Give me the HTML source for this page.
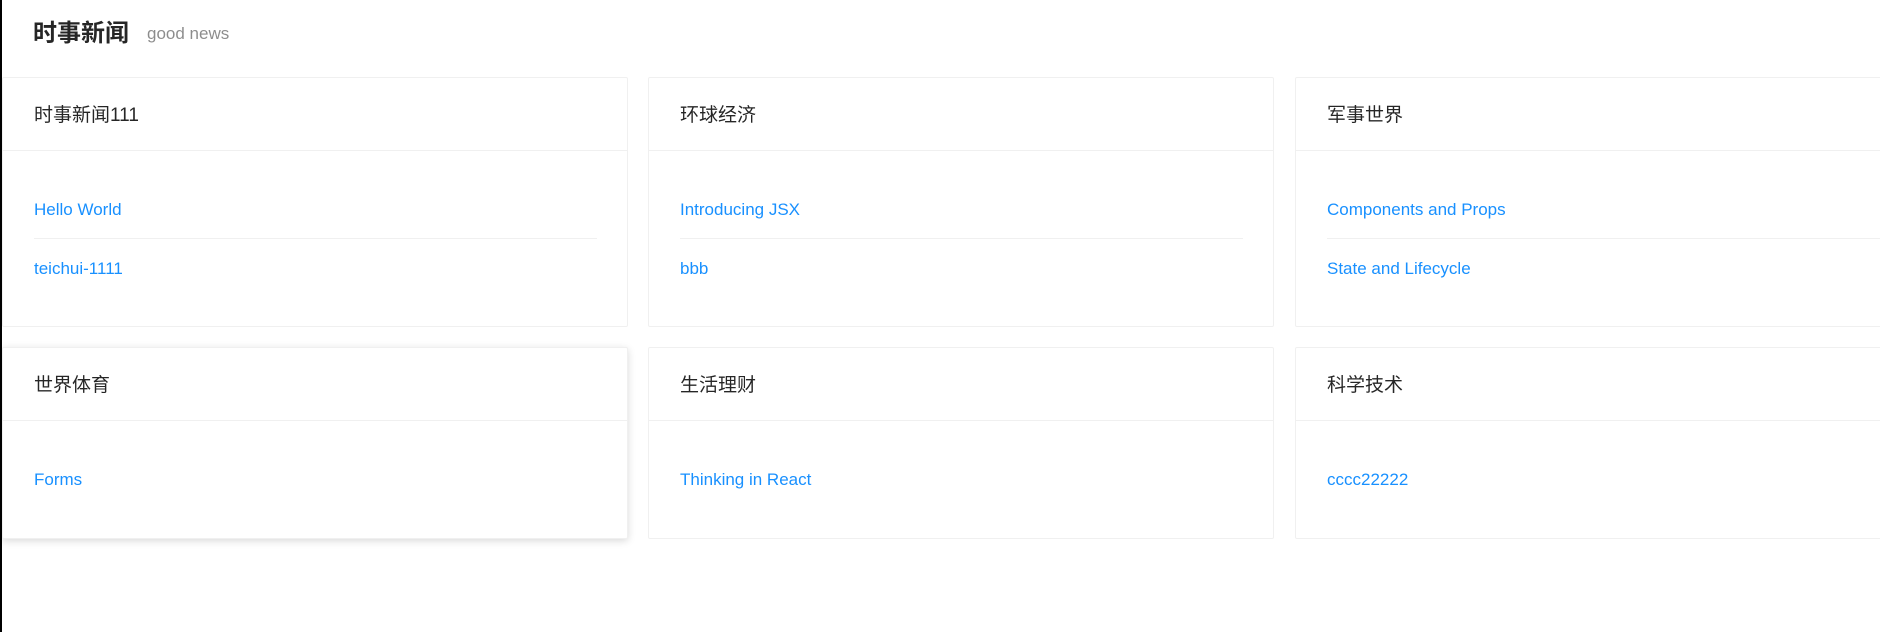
<!DOCTYPE html>
<html><head><meta charset="utf-8"><style>
*{margin:0;padding:0;box-sizing:border-box}
body{width:1880px;height:632px;background:#fff;position:relative;overflow:hidden;font-family:"Liberation Sans","Noto Sans CJK SC",sans-serif}
.bar{position:absolute;left:0;top:0;width:2px;height:632px;background:#000}
.h{position:absolute;left:33px;top:18px;font-size:24px;font-weight:bold;color:rgba(0,0,0,.85);line-height:32px}
.s{position:absolute;left:147px;top:22px;font-size:17px;color:rgba(0,0,0,.45);line-height:24px}
.card{position:absolute;border:1px solid #f0f0f0;border-radius:2px;background:#fff}
.card .t{position:absolute;left:31px;font-size:19px;color:rgba(0,0,0,.85);line-height:26px}
.card .d{position:absolute;left:0;right:0;height:1px;background:#f0f0f0}
.card .a{position:absolute;left:31px;font-size:17px;color:#1890ff;line-height:24px}
.card .l{position:absolute;left:31px;right:30px;height:1px;background:#f0f0f0}
</style></head><body>
<div class="bar"></div>
<div class="h">时事新闻</div><div class="s">good news</div>

<div class="card" style="left:2px;top:77px;width:626px;height:250px">
<div class="t" style="top:25px">时事新闻111</div><div class="d" style="top:72px"></div>
<div class="a" style="top:120px">Hello World</div><div class="l" style="top:160px"></div>
<div class="a" style="top:179px">teichui-1111</div></div>

<div class="card" style="left:648px;top:77px;width:626px;height:250px">
<div class="t" style="top:25px">环球经济</div><div class="d" style="top:72px"></div>
<div class="a" style="top:120px">Introducing JSX</div><div class="l" style="top:160px"></div>
<div class="a" style="top:179px">bbb</div></div>

<div class="card" style="left:1295px;top:77px;width:626px;height:250px">
<div class="t" style="top:25px">军事世界</div><div class="d" style="top:72px"></div>
<div class="a" style="top:120px">Components and Props</div><div class="l" style="top:160px"></div>
<div class="a" style="top:179px">State and Lifecycle</div></div>

<div class="card" style="left:2px;top:347px;width:626px;height:192px;box-shadow:0 2px 8px rgba(0,0,0,.15)">
<div class="t" style="top:25px">世界体育</div><div class="d" style="top:72px"></div>
<div class="a" style="top:120px">Forms</div></div>

<div class="card" style="left:648px;top:347px;width:626px;height:192px">
<div class="t" style="top:25px">生活理财</div><div class="d" style="top:72px"></div>
<div class="a" style="top:120px">Thinking in React</div></div>

<div class="card" style="left:1295px;top:347px;width:626px;height:192px">
<div class="t" style="top:25px">科学技术</div><div class="d" style="top:72px"></div>
<div class="a" style="top:120px">cccc22222</div></div>
</body></html>
